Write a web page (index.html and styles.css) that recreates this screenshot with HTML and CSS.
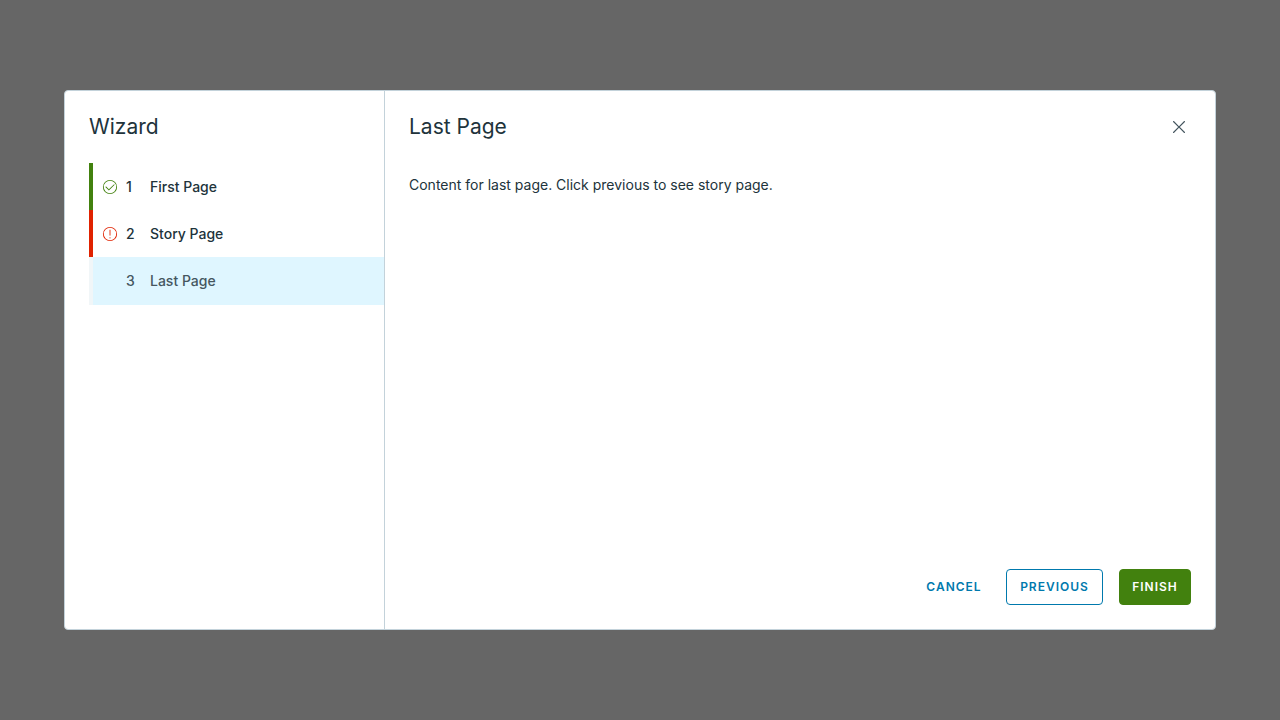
FILE: index.html
```html
<!DOCTYPE html>
<html lang="en">
<head>
<meta charset="utf-8">
<meta name="viewport" content="width=device-width, initial-scale=1">
<title>Wizard</title>
<link rel="stylesheet" href="styles.css">
</head>
<body>
<div class="backdrop">
  <div class="wizard" role="dialog" aria-modal="true" aria-labelledby="wizard-title">
    <aside class="stepnav">
      <h1 class="title" id="wizard-title">Wizard</h1>
      <ol class="steps">
        <li class="step step-complete">
          <button class="step-link" type="button">
            <svg class="step-icon" viewBox="0 0 36 36" aria-hidden="true"><path d="M18 2a16 16 0 1 0 16 16A16 16 0 0 0 18 2Zm0 30a14 14 0 1 1 14-14 14 14 0 0 1-14 14Z"/><path d="M28 12.1a1 1 0 0 0-1.4 0L15.5 23.2l-6.1-6.1A1 1 0 0 0 8 18.5L15.5 26 28 13.5a1 1 0 0 0 0-1.4Z"/></svg>
            <span class="step-number">1</span>
            <span class="step-name">First Page</span>
          </button>
        </li>
        <li class="step step-error">
          <button class="step-link" type="button">
            <svg class="step-icon" viewBox="0 0 36 36" aria-hidden="true"><path d="M18 2a16 16 0 1 0 16 16A16 16 0 0 0 18 2Zm0 30a14 14 0 1 1 14-14 14 14 0 0 1-14 14Z"/><path d="M18 22a1 1 0 0 0 1-1V9a1 1 0 0 0-2 0v12a1 1 0 0 0 1 1Z"/><circle cx="18" cy="26.6" r="1.3"/></svg>
            <span class="step-number">2</span>
            <span class="step-name">Story Page</span>
          </button>
        </li>
        <li class="step step-current" aria-current="step">
          <button class="step-link" type="button">
            <span class="step-icon"></span>
            <span class="step-number">3</span>
            <span class="step-name">Last Page</span>
          </button>
        </li>
      </ol>
    </aside>
    <main class="page">
      <header class="page-header">
        <h2 class="title">Last Page</h2>
        <button class="close" type="button" aria-label="Close">
          <svg class="close-icon" viewBox="0 0 36 36" aria-hidden="true"><path d="m19.4 18 8.3-8.3a1 1 0 0 0-1.4-1.4L18 16.6 9.7 8.3a1 1 0 0 0-1.4 1.4l8.3 8.3-8.3 8.3a1 1 0 0 0 1.4 1.4l8.3-8.3 8.3 8.3a1 1 0 0 0 1.4-1.4Z"/></svg>
        </button>
      </header>
      <p class="page-content">Content for last page. Click previous to see story page.</p>
      <footer class="actions">
        <button class="btn btn-link" type="button">Cancel</button>
        <button class="btn btn-outline" type="button">Previous</button>
        <button class="btn btn-success" type="button">Finish</button>
      </footer>
    </main>
  </div>
</div>
</body>
</html>
```

FILE: styles.css
```css
* {
  box-sizing: border-box;
}

body {
  margin: 0;
  color: #21333b;
  font-family: Metropolis, Inter, sans-serif;
  font-size: 14px;
  line-height: 24px;
}

button {
  margin: 0;
  font: inherit;
  cursor: pointer;
}

.backdrop {
  display: flex;
  align-items: center;
  justify-content: center;
  min-height: 100vh;
  background: #666;
}

.wizard {
  display: flex;
  width: 90%;
  min-height: 75vh;
  overflow: hidden;
  background: #fff;
  border: 1px solid #c3d2da;
  border-radius: 4px;
}

.stepnav {
  flex: 0 0 320px;
  padding: 24px 0 24px 24px;
  border-right: 1px solid #c3d2da;
}

.title {
  margin: 0;
  font-size: 21px;
  font-weight: 400;
  line-height: 24px;
}

.steps {
  margin: 24px 0 0;
  padding: 0;
  list-style: none;
}

.step {
  border-left: 4px solid #f1f6f8;
  background-clip: padding-box;
}

.step-complete {
  border-color: #42810e;
}

.step-error {
  border-color: #e02200;
}

.step-current {
  background-color: #dff6ff;
}

.step-link {
  display: flex;
  align-items: center;
  width: 100%;
  height: 47px;
  padding: 0 9px;
  color: #21333b;
  font-weight: 500;
  text-align: left;
  background: none;
  border: 0;
}

.step-current .step-link {
  height: 48px;
  color: #45565f;
}

.step-icon {
  width: 16px;
  height: 16px;
  margin-right: 8px;
}

.step-complete .step-icon {
  fill: #42810e;
}

.step-error .step-icon {
  fill: #e02200;
}

.step-number {
  width: 24px;
}

.page {
  display: flex;
  flex: 1;
  flex-direction: column;
  min-width: 0;
  padding: 24px;
}

.page-header {
  display: flex;
  align-items: center;
  justify-content: space-between;
}

.close {
  display: flex;
  padding: 1px;
  color: #45565f;
  background: none;
  border: 0;
}

.close-icon {
  width: 22px;
  height: 22px;
  fill: currentColor;
}

.page-content {
  flex: 1;
  margin: 34px 0 24px;
}

.actions {
  display: flex;
  justify-content: flex-end;
  gap: 16px;
}

.btn {
  height: 36px;
  min-width: 72px;
  padding: 0 12px;
  color: #0079ad;
  font-size: 12px;
  font-weight: 600;
  letter-spacing: 1px;
  text-transform: uppercase;
  background: none;
  border: 1px solid transparent;
  border-radius: 4px;
}

.btn-link {
  padding: 0 7px;
}

.btn-outline {
  min-width: 97px;
  border-color: #0079ad;
}

.btn-success {
  color: #fff;
  background: #42810e;
  border-color: #42810e;
}
```
